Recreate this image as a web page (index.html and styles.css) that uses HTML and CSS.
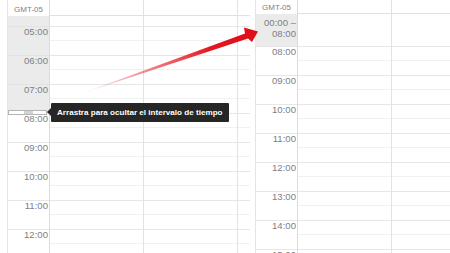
FILE: index.html
```html
<!DOCTYPE html>
<html lang="es">
<head>
  <meta charset="UTF-8">
  <title>Ocultar horas</title>
  <link rel="stylesheet" href="styles.css">
</head>
<body>
  <div class="cal cal-left">
    <div class="gutter">
      <div class="gutter-head">GMT-05</div>
      <div class="hidden-range">
        <div class="pad"></div>
        <div class="hour">05:00</div>
        <div class="hour">06:00</div>
        <div class="hour">07:00</div>
      </div>
      <div class="hour">08:00</div>
      <div class="hour">09:00</div>
      <div class="hour">10:00</div>
      <div class="hour">11:00</div>
      <div class="hour">12:00</div>
      <div class="handle"><span class="grip"></span></div>
    </div>
    <div class="day">
      <div class="day-head"></div>
      <div class="pad"></div>
      <div class="slot"></div><div class="slot"></div><div class="slot"></div><div class="slot"></div>
      <div class="slot"></div><div class="slot"></div><div class="slot"></div><div class="slot"></div>
    </div>
    <div class="day">
      <div class="day-head"></div>
      <div class="pad"></div>
      <div class="slot"></div><div class="slot"></div><div class="slot"></div><div class="slot"></div>
      <div class="slot"></div><div class="slot"></div><div class="slot"></div><div class="slot"></div>
    </div>
    <div class="day last">
      <div class="day-head"></div>
      <div class="pad"></div>
      <div class="slot"></div><div class="slot"></div><div class="slot"></div><div class="slot"></div>
      <div class="slot"></div><div class="slot"></div><div class="slot"></div><div class="slot"></div>
    </div>
    <div class="tooltip">Arrastra para ocultar el intervalo de tiempo</div>
  </div>

  <div class="cal cal-right">
    <div class="gutter">
      <div class="gutter-head">GMT-05</div>
      <div class="range">00:00 &ndash;<br>08:00</div>
      <div class="hour">08:00</div>
      <div class="hour">09:00</div>
      <div class="hour">10:00</div>
      <div class="hour">11:00</div>
      <div class="hour">12:00</div>
      <div class="hour">13:00</div>
      <div class="hour">14:00</div>
      <div class="hour">15:00</div>
    </div>
    <div class="day">
      <div class="day-head"></div>
      <div class="pad"></div>
      <div class="slot"></div><div class="slot"></div><div class="slot"></div><div class="slot"></div>
      <div class="slot"></div><div class="slot"></div><div class="slot"></div><div class="slot"></div>
    </div>
    <div class="day last">
      <div class="day-head"></div>
      <div class="pad"></div>
      <div class="slot"></div><div class="slot"></div><div class="slot"></div><div class="slot"></div>
      <div class="slot"></div><div class="slot"></div><div class="slot"></div><div class="slot"></div>
    </div>
  </div>

  <svg class="arrow" width="450" height="253" viewBox="0 0 450 253">
    <defs>
      <linearGradient id="fade" gradientUnits="userSpaceOnUse" x1="80" y1="94" x2="252" y2="34">
        <stop offset="0" stop-color="#e8303a" stop-opacity="0"/>
        <stop offset="0.4" stop-color="#e8303a" stop-opacity="0.6"/>
        <stop offset="0.75" stop-color="#e41820" stop-opacity="1"/>
        <stop offset="1" stop-color="#dd0f18"/>
      </linearGradient>
    </defs>
    <polygon fill="url(#fade)" points="80,94 245,33.5 244,27.5 258,31.5 252,42 248,38.5"/>
  </svg>
</body>
</html>
```

FILE: styles.css
```css
* { box-sizing: border-box; }
body {
  margin: 0;
  width: 450px;
  height: 253px;
  overflow: hidden;
  background: #fff;
  font-family: "Liberation Sans", Arial, sans-serif;
  color: #808080;
  display: flex;
  position: relative;
}

.cal {
  display: flex;
  position: relative;
  height: 253px;
  overflow: hidden;
}
.cal-left { width: 250px; padding-left: 7px; }
.cal-right { flex: 1; margin-left: 5px; }

.gutter {
  width: 43px;
  flex: none;
  position: relative;
  border-left: 1px solid #e4e4e4;
  border-right: 1px solid #dcdcdc;
}
.day {
  width: 94px;
  flex: none;
  border-right: 1px solid #e2e2e2;
}
.day.last { flex: 1; border-right: none; }

.gutter-head {
  height: 16px;
  padding-top: 5px;
  font-size: 8px;
  line-height: 10px;
  text-align: center;
}
.day-head {
  height: 16px;
  border-bottom: 1px solid #e0e0e0;
}
.cal-left .pad { height: 10px; }

.hour {
  height: 29px;
  border-top: 1px solid #e6e6e6;
  padding-right: 1px;
  font-size: 9.6px;
  line-height: 10px;
  text-align: right;
}
.hidden-range { background: #ebebeb; }
.hidden-range .hour { border-top-color: #e3e3e3; }

.slot {
  height: 29px;
  border-top: 1px solid #e6e6e6;
}
.slot::after {
  content: "";
  display: block;
  margin-top: 13px;
  border-top: 1px solid #f1f1f1;
}

.handle {
  position: absolute;
  left: 0;
  top: 110px;
  width: 39px;
  height: 5px;
  background: #fff;
  border: 1px solid #b3b3b3;
}
.grip {
  display: block;
  width: 9px;
  height: 100%;
  margin-left: 15px;
  background: #d2d2d2;
}

.tooltip {
  position: absolute;
  left: 51px;
  top: 103px;
  height: 19px;
  padding: 4px 6px 0;
  background: #262626;
  color: #fff;
  font-size: 8.1px;
  font-weight: bold;
  line-height: 11px;
  white-space: nowrap;
  border-radius: 1px;
}
.tooltip::before {
  content: "";
  position: absolute;
  left: -4px;
  top: 5px;
  border-style: solid;
  border-width: 4px 4px 4px 0;
  border-color: transparent #262626 transparent transparent;
}

/* right panel: hidden hours collapsed into one block */
.cal-right .gutter-head { height: 14px; padding-top: 3px; }
.cal-right .day-head { height: 14px; }
.cal-right .pad { height: 32px; }
.range {
  height: 32px;
  padding: 3px 1px 0 0;
  background: #ebebeb;
  font-size: 9.6px;
  line-height: 11px;
  text-align: right;
}

.arrow {
  position: absolute;
  left: 0;
  top: 0;
  pointer-events: none;
}
```
